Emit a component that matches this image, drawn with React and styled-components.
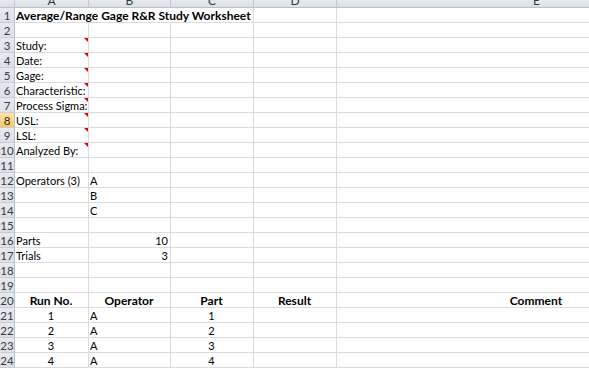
import React from "react";
import styled, { createGlobalStyle, css } from "styled-components";

const GlobalStyle = createGlobalStyle`
  html, body {
    margin: 0;
    padding: 0;
    background: #ffffff;
    overflow: hidden;
  }
  body {
    font-family: Lato, "Open Sans", sans-serif;
  }
`;

const columns = ["A", "B", "C", "D", "E"];

// each row: list of cells { col, text, align, bold, span, note }
const rows = [
  [{ col: 0, text: "Average/Range Gage R&R Study Worksheet", bold: true, span: 3 }],
  [],
  [{ col: 0, text: "Study:", note: true }],
  [{ col: 0, text: "Date:", note: true }],
  [{ col: 0, text: "Gage:", note: true }],
  [{ col: 0, text: "Characteristic:", note: true }],
  [{ col: 0, text: "Process Sigma:", note: true }],
  [{ col: 0, text: "USL:", note: true }],
  [{ col: 0, text: "LSL:", note: true }],
  [{ col: 0, text: "Analyzed By:", note: true }],
  [],
  [{ col: 0, text: "Operators (3)" }, { col: 1, text: "A" }],
  [{ col: 1, text: "B" }],
  [{ col: 1, text: "C" }],
  [],
  [{ col: 0, text: "Parts" }, { col: 1, text: "10", align: "right" }],
  [{ col: 0, text: "Trials" }, { col: 1, text: "3", align: "right" }],
  [],
  [],
  [
    { col: 0, text: "Run No.", bold: true, align: "center" },
    { col: 1, text: "Operator", bold: true, align: "center" },
    { col: 2, text: "Part", bold: true, align: "center" },
    { col: 3, text: "Result", bold: true, align: "center" },
    { col: 4, text: "Comment", bold: true, align: "center" },
  ],
  ...[1, 2, 3, 4].map((n) => [
    { col: 0, text: String(n), align: "center" },
    { col: 1, text: "A" },
    { col: 2, text: String(n), align: "center" },
  ]),
];

const ACTIVE_ROW = 8;

function fillRow(cells) {
  const out = [];
  let c = 0;
  while (c < columns.length) {
    const found = cells.find((cell) => cell.col === c);
    if (found) {
      out.push(found);
      c += found.span || 1;
    } else {
      out.push({ col: c, text: "" });
      c += 1;
    }
  }
  return out;
}

export default function App() {
  return (
    <>
      <GlobalStyle />
      <Sheet>
        <Corner />
        {columns.map((letter) => (
          <ColHeader key={letter}>
            <span>{letter}</span>
          </ColHeader>
        ))}
        {rows.map((cells, i) => (
          <React.Fragment key={i}>
            <RowHeader $active={i + 1 === ACTIVE_ROW}>{i + 1}</RowHeader>
            {fillRow(cells).map((cell) => (
              <Cell
                key={cell.col}
                $span={cell.span || 1}
                $align={cell.align || "left"}
                $bold={cell.bold}
                $note={cell.note}
              >
                {cell.text}
              </Cell>
            ))}
          </React.Fragment>
        ))}
      </Sheet>
    </>
  );
}

const Sheet = styled.div`
  display: grid;
  grid-template-columns: 15px 74px 82px 83px 83px 400px;
  grid-template-rows: 8px repeat(24, 15px);
  width: 589px;
  height: 369px;
  overflow: hidden;
  font-size: 11px;
  color: #000;
`;

const headerBase = css`
  box-sizing: border-box;
  background: linear-gradient(#e6e9ee, #dde1e7);
  color: #333c48;
  overflow: hidden;
`;

const Corner = styled.div`
  ${headerBase};
  border-right: 1px solid #c4c9d0;
  border-bottom: 1px solid #b9c0c9;
`;

const ColHeader = styled.div`
  ${headerBase};
  display: flex;
  justify-content: center;
  align-items: flex-end;
  font-size: 12px;
  border-right: 1px solid #c4c9d0;
  border-bottom: 1px solid #b9c0c9;
  span {
    display: block;
    line-height: 12px;
  }
`;

const RowHeader = styled.div`
  ${headerBase};
  display: flex;
  align-items: center;
  justify-content: center;
  font-size: 11.5px;
  border-right: 1px solid #b9c0c9;
  border-bottom: 1px solid #c9ced5;
  ${(p) =>
    p.$active &&
    css`
      background: linear-gradient(#fbe3a6, #f5c969);
      color: #2c2c2c;
    `}
`;

const Cell = styled.div`
  position: relative;
  box-sizing: border-box;
  grid-column: span ${(p) => p.$span};
  display: flex;
  align-items: center;
  justify-content: ${(p) =>
    p.$align === "center" ? "center" : p.$align === "right" ? "flex-end" : "flex-start"};
  padding: 0 2px 0 1px;
  border-right: 1px solid #dadcdd;
  border-bottom: 1px solid #dadcdd;
  font-size: ${(p) => (p.$bold ? "12px" : "11px")};
  font-weight: ${(p) => (p.$bold ? 700 : 400)};
  white-space: nowrap;
  overflow: hidden;
  ${(p) =>
    p.$note &&
    css`
      &::after {
        content: "";
        position: absolute;
        top: 0;
        right: 0;
        border-top: 4px solid #e00000;
        border-left: 4px solid transparent;
      }
    `}
`;
